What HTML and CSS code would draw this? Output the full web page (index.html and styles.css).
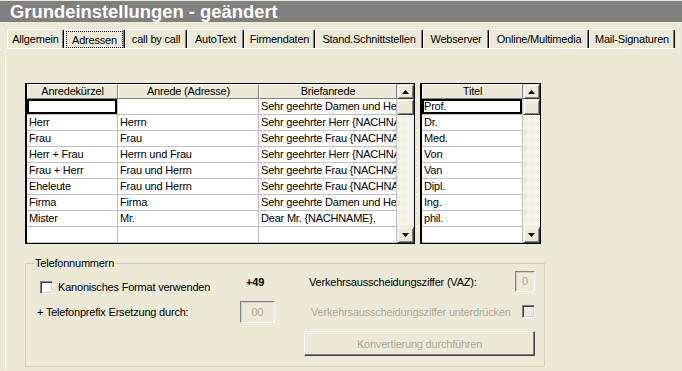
FILE: index.html
```html
<!DOCTYPE html>
<html lang="de">
<head>
    <meta charset="UTF-8">
    <title>Grundeinstellungen</title>
    <link rel="stylesheet" href="styles.css">
</head>
<body>
    <div class="titlebar">Grundeinstellungen - geändert</div>

    <div class="tabs">
        <div class="tab">Allgemein</div>
        <div class="tab tab-active"><span class="focus">Adressen</span></div>
        <div class="tab">call by call</div>
        <div class="tab">AutoText</div>
        <div class="tab">Firmendaten</div>
        <div class="tab">Stand.Schnittstellen</div>
        <div class="tab">Webserver</div>
        <div class="tab">Online/Multimedia</div>
        <div class="tab">Mail-Signaturen</div>
    </div>

    <div class="panel">
        <div class="grids">
            <div class="grid grid-main">
                <table class="cells cells-main">
                    <colgroup><col class="c1"><col class="c2"><col class="c3"></colgroup>
                    <thead>
                        <tr><th>Anredekürzel</th><th>Anrede (Adresse)</th><th>Briefanrede</th></tr>
                    </thead>
                    <tbody>
                        <tr><td class="current"></td><td></td><td>Sehr geehrte Damen und Herren,</td></tr>
                        <tr><td>Herr</td><td>Herrn</td><td>Sehr geehrter Herr {NACHNAME},</td></tr>
                        <tr><td>Frau</td><td>Frau</td><td>Sehr geehrte Frau {NACHNAME},</td></tr>
                        <tr><td>Herr + Frau</td><td>Herrn und Frau</td><td>Sehr geehrter Herr {NACHNAME},</td></tr>
                        <tr><td>Frau + Herr</td><td>Frau und Herrn</td><td>Sehr geehrte Frau {NACHNAME},</td></tr>
                        <tr><td>Eheleute</td><td>Frau und Herrn</td><td>Sehr geehrte Frau {NACHNAME},</td></tr>
                        <tr><td>Firma</td><td>Firma</td><td>Sehr geehrte Damen und Herren,</td></tr>
                        <tr><td>Mister</td><td>Mr.</td><td>Dear Mr. {NACHNAME},</td></tr>
                        <tr><td></td><td></td><td></td></tr>
                    </tbody>
                </table>
                <div class="vscroll">
                    <div class="sb-btn sb-head"><svg width="7" height="4" viewBox="0 0 7 4"><path d="M3.5 0L7 4H0z" fill="#000"/></svg></div>
                    <div class="sb-btn"></div>
                    <div class="sb-track"></div>
                    <div class="sb-btn"><svg width="7" height="4" viewBox="0 0 7 4"><path d="M0 0H7L3.5 4z" fill="#000"/></svg></div>
                </div>
            </div>

            <div class="grid grid-title">
                <table class="cells cells-title">
                    <colgroup><col class="ct"></colgroup>
                    <thead>
                        <tr><th>Titel</th></tr>
                    </thead>
                    <tbody>
                        <tr><td class="current">Prof.</td></tr>
                        <tr><td>Dr.</td></tr>
                        <tr><td>Med.</td></tr>
                        <tr><td>Von</td></tr>
                        <tr><td>Van</td></tr>
                        <tr><td>Dipl.</td></tr>
                        <tr><td>Ing.</td></tr>
                        <tr><td>phil.</td></tr>
                        <tr><td></td></tr>
                    </tbody>
                </table>
                <div class="vscroll">
                    <div class="sb-btn sb-head"><svg width="7" height="4" viewBox="0 0 7 4"><path d="M3.5 0L7 4H0z" fill="#000"/></svg></div>
                    <div class="sb-btn"></div>
                    <div class="sb-track"></div>
                    <div class="sb-btn"><svg width="7" height="4" viewBox="0 0 7 4"><path d="M0 0H7L3.5 4z" fill="#000"/></svg></div>
                </div>
            </div>
        </div>

        <fieldset class="group">
            <legend>Telefonnummern</legend>
            <div class="phone">
                <div class="phone-left">
                    <div class="row-canon">
                        <span class="check"></span>
                        <span class="canon-label">Kanonisches Format verwenden</span>
                        <span class="prefix">+49</span>
                    </div>
                    <div class="row-replace">
                        <span class="replace-label">+ Telefonprefix Ersetzung durch:</span>
                        <span class="field field-wide">00</span>
                    </div>
                </div>
                <div class="phone-right">
                    <div class="row-vaz">
                        <span class="vaz-label">Verkehrsausscheidungsziffer (VAZ):</span>
                        <span class="field field-small">0</span>
                    </div>
                    <div class="row-suppress">
                        <span class="suppress-label">Verkehrsausscheidungsziffer unterdrücken</span>
                        <span class="check check-off"></span>
                    </div>
                    <button class="btn" disabled>Konvertierung durchführen</button>
                </div>
            </div>
        </fieldset>
    </div>
</body>
</html>
```

FILE: styles.css
```css
body {
    margin: 0;
    background: #ece9d8;
    font-family: "Liberation Sans", Arial, sans-serif;
    font-size: 11px;
    letter-spacing: -0.2px;
    color: #000;
    overflow: hidden;
}

/* window caption */
.titlebar {
    margin-top: 1px;
    height: 21px;
    line-height: 21px;
    padding-left: 10px;
    background: #808080;
    color: #fff;
    font-size: 18.4px;
    font-weight: bold;
    letter-spacing: 0;
}

/* tab strip */
.tabs {
    display: flex;
    align-items: flex-end;
    margin-top: 6px;
    padding-left: 7px;
    height: 20px;
}
.tab {
    height: 19px;
    line-height: 18px;
    padding: 0;
    text-align: center;
    border-top: 1px solid #fff;
    border-left: 1px solid #fff;
    border-right: 1px solid #000;
    box-shadow: inset -1px 0 #808080;
    border-radius: 2px 2px 0 0;
    box-sizing: border-box;
    white-space: nowrap;
}
.tab:nth-child(1) { width: 57px; }
.tab:nth-child(2) { width: 61px; }
.tab:nth-child(3) { width: 62px; }
.tab:nth-child(4) { width: 57px; }
.tab:nth-child(5) { width: 71px; }
.tab:nth-child(6) { width: 108px; }
.tab:nth-child(7) { width: 66px; }
.tab:nth-child(8) { width: 100px; }
.tab:nth-child(9) { width: 86px; }
.tab-active {
    padding: 1px 1px 0 1px;
}
.focus {
    display: block;
    height: 17px;
    line-height: 16px;
    border: 1px dotted #000;
    box-sizing: border-box;
}

/* tab page */
.panel {
    margin: 0 7px 0 5px;
    border-top: 1px solid #fff;
    border-left: 1px solid #fff;
    padding: 34px 0 0 19px;
    height: 322px;
    box-sizing: border-box;
}

.grids {
    display: flex;
    gap: 5px;
}
.grid {
    display: flex;
    border: 1px solid #000;
    border-left-width: 2px;
    background: #fff;
    box-sizing: border-box;
}
.grid-main {
    width: 390px;
}
.grid-title {
    width: 121px;
}

.cells {
    border-collapse: separate;
    border-spacing: 0;
    table-layout: fixed;
    flex: none;
}
.cells-main {
    width: 370px;
}
.cells-title {
    width: 101px;
}
.c1 { width: 91px; }
.c2 { width: 141px; }
.c3 { width: 138px; }
.ct { width: 101px; }

.cells th {
    height: 15px;
    padding: 0;
    background: #ece9d8;
    border-top: 1px solid #fff;
    border-left: 1px solid #fff;
    border-right: 1px solid #808080;
    border-bottom: 1px solid #808080;
    box-sizing: border-box;
    font-weight: normal;
    line-height: 13px;
    text-align: center;
}
.cells td {
    height: 16px;
    padding: 0 2px;
    border-right: 1px solid #c0c0c0;
    border-bottom: 1px solid #c0c0c0;
    box-sizing: border-box;
    line-height: 15px;
    white-space: nowrap;
    overflow: hidden;
}
.cells td.current {
    box-shadow: inset 0 0 0 2px #000;
}

/* vertical scrollbar */
.vscroll {
    width: 17px;
    display: flex;
    flex-direction: column;
}
.sb-btn {
    height: 16px;
    display: flex;
    align-items: center;
    justify-content: center;
    background: #ece9d8;
    border: 1px solid;
    border-color: #ece9d8 #404040 #404040 #ece9d8;
    box-shadow: inset 1px 1px #fff, inset -1px -1px #808080;
    box-sizing: border-box;
}
.sb-head {
    height: 15px;
}
.sb-track {
    flex: 1;
    background: repeating-conic-gradient(#fff 0 25%, #ece9d8 0 50%) 0 0 / 2px 2px;
}

/* group box */
.group {
    margin: 13px 0 0 0;
    width: 520px;
    padding: 1px 0 10px 0;
    border: 1px solid #d0d0bf;
    box-sizing: border-box;
}
.group legend {
    margin-left: 8px;
    padding: 0 1px;
    line-height: 13px;
}

.phone {
    display: flex;
}
.phone-left {
    width: 278px;
}
.phone-right {
    width: 231px;
}

.row-canon {
    display: flex;
    align-items: flex-start;
    margin-top: 10px;
    padding-left: 14px;
    height: 13px;
    line-height: 13px;
}
.canon-label {
    margin-left: 5px;
    width: 188px;
}
.prefix {
    margin-top: -5px;
    font-weight: bold;
}

.row-replace {
    display: flex;
    align-items: center;
    margin-top: 7px;
    padding-left: 11px;
    height: 22px;
}
.replace-label {
    width: 203px;
}

.check {
    width: 13px;
    height: 13px;
    flex: none;
    background: #fff;
    border: 1px solid;
    border-color: #808080 #fff #fff #808080;
    box-shadow: inset 1px 1px #404040, inset -1px -1px #d4d0c8;
    box-sizing: border-box;
}
.check-off {
    background: #ece9d8;
}

.field {
    height: 22px;
    line-height: 20px;
    text-align: center;
    color: #aca899;
    background: #ece9d8;
    border: 1px solid;
    border-color: #808080 #fff #fff #808080;
    box-shadow: inset 1px 1px #d4d0c8;
    box-sizing: border-box;
}
.field-wide {
    width: 35px;
}
.field-small {
    width: 20px;
    height: 21px;
    line-height: 19px;
}

.row-vaz {
    display: flex;
    align-items: center;
    height: 21px;
    padding-left: 5px;
}
.vaz-label {
    width: 206px;
}

.row-suppress {
    display: flex;
    align-items: center;
    margin-top: 13px;
    height: 13px;
    padding-left: 7px;
    color: #aca899;
}
.suppress-label {
    width: 211px;
    white-space: nowrap;
}

.btn {
    display: block;
    margin-top: 13px;
    width: 231px;
    height: 25px;
    padding: 0;
    font-family: inherit;
    font-size: 11px;
    letter-spacing: -0.2px;
    color: #aca899;
    background: #ece9d8;
    border: 1px solid;
    border-color: #fff #404040 #404040 #fff;
    box-shadow: inset -1px -1px #808080;
}
```
